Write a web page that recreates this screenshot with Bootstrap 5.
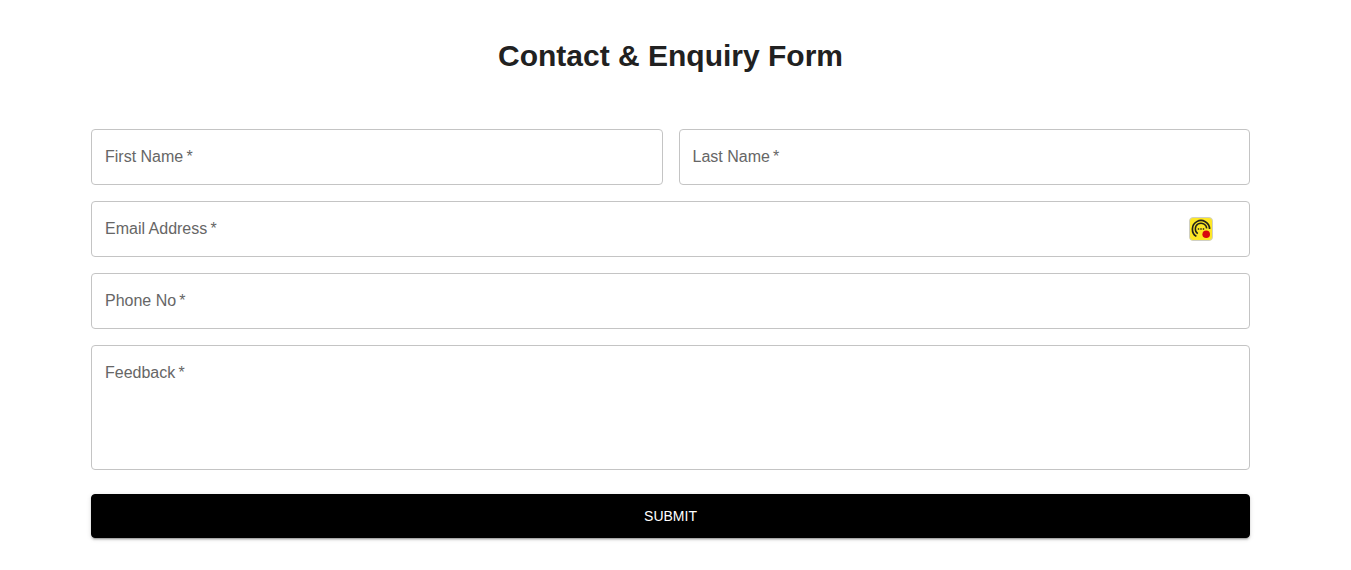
<!DOCTYPE html>
<html lang="en">
<head>
<meta charset="utf-8">
<meta name="viewport" content="width=device-width, initial-scale=1">
<title>Contact &amp; Enquiry Form</title>
<link href="https://cdn.jsdelivr.net/npm/bootstrap@5.3.0/dist/css/bootstrap.min.css" rel="stylesheet">
<style>
  body { font-family: "Liberation Sans", Arial, sans-serif; color: #212121; background: #fff; }
  .enquiry { padding: 36px 101px 32px 91px; }
  .enquiry-title { font-size: 30px; line-height: 40px; margin-bottom: 53px; }
  .form-floating > .form-control {
    height: 56px; min-height: 56px; border: 1px solid #c4c4c4; border-radius: 4px; resize: none;
  }
  .form-floating > textarea.form-control { height: 125px; }
  .form-floating > label { color: #666; line-height: 24px; padding: 15px 13px; }
  .autofill-icon { right: 37px; top: 16px; width: 24px; height: 24px; }
  .submit-btn {
    height: 44px; padding: 0; border-radius: 4px; font-size: 14px; line-height: 24px;
    box-shadow: 0 3px 1px -2px rgba(0,0,0,.2), 0 2px 2px 0 rgba(0,0,0,.14), 0 1px 5px 0 rgba(0,0,0,.12);
    --bs-btn-bg: #000; --bs-btn-border-color: #000; --bs-btn-color: #fff;
    --bs-btn-hover-bg: #222; --bs-btn-hover-color: #fff;
  }
  @media (max-width: 767px) { .enquiry { padding-left: 16px; padding-right: 16px; } }
</style>
</head>
<body>
<main class="container-fluid enquiry">
  <h1 class="enquiry-title fw-bold text-center">Contact &amp; Enquiry Form</h1>
  <form>
    <div class="row g-3">
      <div class="col-sm-6">
        <div class="form-floating">
          <input type="text" class="form-control" id="firstName" placeholder=" " required>
          <label for="firstName">First Name&thinsp;*</label>
        </div>
      </div>
      <div class="col-sm-6">
        <div class="form-floating">
          <input type="text" class="form-control" id="lastName" placeholder=" " required>
          <label for="lastName">Last Name&thinsp;*</label>
        </div>
      </div>
      <div class="col-12">
        <div class="form-floating">
          <input type="email" class="form-control" id="email" placeholder=" " required>
          <label for="email">Email Address&thinsp;*</label>
          <svg class="autofill-icon position-absolute" viewBox="0 0 24 24" aria-hidden="true">
            <rect x=".5" y=".5" width="23" height="23" rx="3.5" fill="#fde725" stroke="#cfcfc4"/>
            <g fill="none" stroke="#24231a">
              <path d="M7.4 19.4A8.6 8.6 0 1 1 20.6 12" stroke-width="1.7"/>
              <path d="M8.8 16.6A5.7 5.7 0 1 1 17.7 11.4" stroke-width="1.5"/>
              <path d="M8.8 12h6.4" stroke-width="1.4" stroke-dasharray="1.4 1.1"/>
            </g>
            <circle cx="17.2" cy="17.2" r="3.8" fill="#d9080c"/>
          </svg>
        </div>
      </div>
      <div class="col-12">
        <div class="form-floating">
          <input type="tel" class="form-control" id="phone" placeholder=" " required>
          <label for="phone">Phone No&thinsp;*</label>
        </div>
      </div>
      <div class="col-12">
        <div class="form-floating">
          <textarea class="form-control" id="feedback" placeholder=" " required></textarea>
          <label for="feedback">Feedback&thinsp;*</label>
        </div>
      </div>
    </div>
    <button type="submit" class="btn submit-btn w-100 mt-4 text-uppercase">Submit</button>
  </form>
</main>
<script src="https://cdn.jsdelivr.net/npm/bootstrap@5.3.0/dist/js/bootstrap.bundle.min.js"></script>
</body>
</html>
